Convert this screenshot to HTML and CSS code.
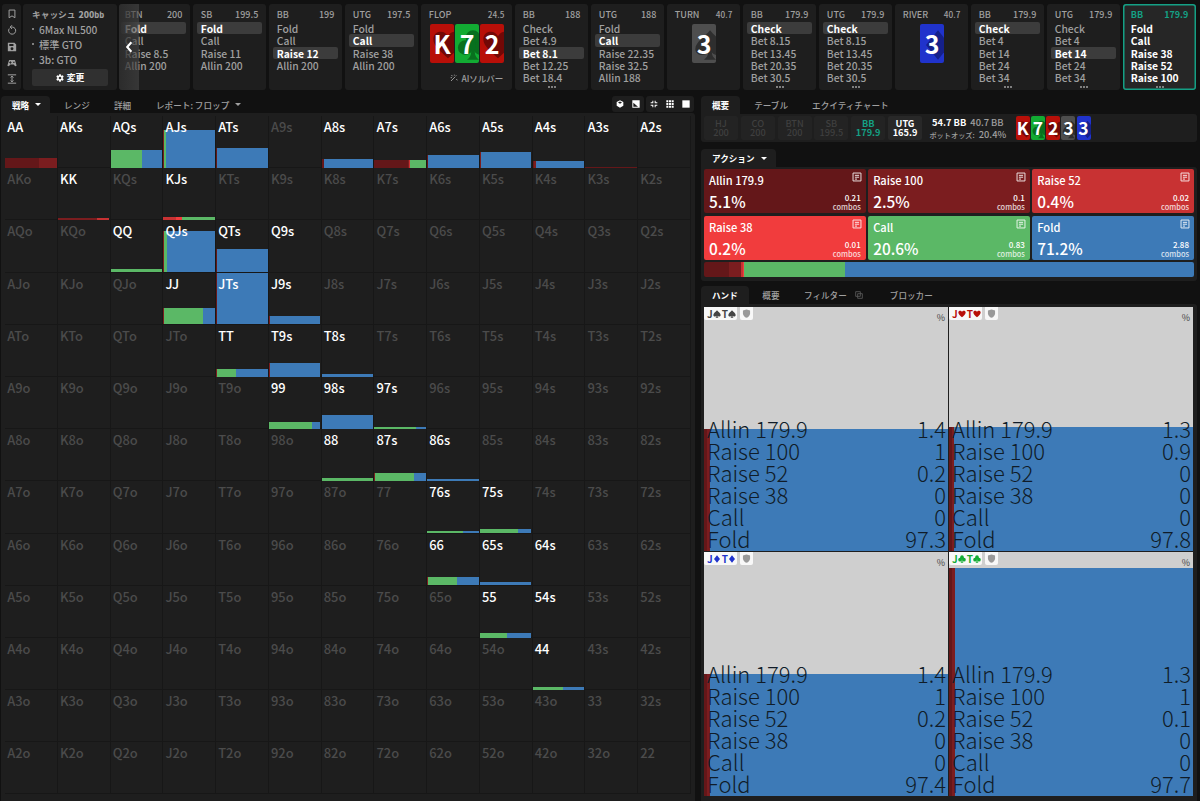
FILE: index.html
```html
<!DOCTYPE html>
<html lang="ja">
<head>
    <meta charset="UTF-8">
    <meta name="viewport" content="width=device-width, initial-scale=1.0">
    <title>GTO ソルバー</title>
    <link rel="stylesheet" href="styles.css">
</head>
<body>
    <svg class="defs" width="0" height="0">
        <symbol id="heart" viewBox="0 0 24 24"><path d="M12 22C7 17 1 13 1 7.500C1 4 3.500 2 6.500 2C9 2 11 3.500 12 5.500C13 3.500 15 2 17.500 2C20.500 2 23 4 23 7.500C23 13 17 17 12 22Z"/></symbol>
        <symbol id="spade" viewBox="0 0 24 24"><path d="M12 1C16 6 23 10 23 15C23 20 16 21 13.300 17.500C13.500 20 14.500 21.500 16.500 23H7.500C9.500 21.500 10.500 20 10.700 17.500C8 21 1 20 1 15C1 10 8 6 12 1Z"/></symbol>
        <symbol id="club" viewBox="0 0 24 24"><circle cx="12" cy="6.500" r="5.500"/><circle cx="6.200" cy="14" r="5.500"/><circle cx="17.800" cy="14" r="5.500"/><path d="M10 9H14L13.300 17C13.500 20 14.500 21.500 16.500 23H7.500C9.500 21.500 10.500 20 10.700 17Z"/></symbol>
        <symbol id="diamond" viewBox="0 0 24 24"><path d="M12 1L21 12L12 23L3 12Z"/></symbol>
        <symbol id="shield" viewBox="0 0 24 24"><path d="M12 1L21.500 4V11C21.500 17 17.500 21 12 23.500C6.500 21 2.500 17 2.500 11V4Z"/></symbol>
        <symbol id="note" viewBox="0 0 24 24"><path d="M2.500 2.500H21.500V21.500H2.500ZM7 8H17M7 12.500H17M7 17H12" fill="none" stroke="currentColor" stroke-width="2.400"/></symbol>
    </svg>

    <header class="topbar">
        <nav class="tools">
            <svg viewBox="0 0 24 24"><path d="M5 2.500H19V21L12 16.500L5 21Z"/></svg>
            <svg viewBox="0 0 24 24"><path d="M5.500 8.500A8.500 8.500 0 1 0 13 5H8M12 0.500L7.500 5L12 9.500"/></svg>
            <svg viewBox="0 0 24 24" class="solid"><path fill-rule="evenodd" d="M2 2H18L22 6V22H2ZM5.500 5V9.500H15.500V5ZM12 12.500A3.500 3.500 0 1 0 12 19.500A3.500 3.500 0 1 0 12 12.500Z"/></svg>
            <svg viewBox="0 0 24 24" class="solid"><path fill-rule="evenodd" d="M5 5H19L23 18C22 20 20 20 18.500 18.500L16 15.500H8L5.500 18.500C4 20 2 20 1 18ZM7 7.500V9.500H5V11.500H7V13.500H9V11.500H11V9.500H9V7.500ZM15 9V12H18V9Z"/></svg>
            <svg viewBox="0 0 24 24"><path d="M2 2H22M2 22H22M12 6V18M8.500 8.500L12 5L15.500 8.500M8.500 15.500L12 19L15.500 15.500"/></svg>
        </nav>
        <section class="setup">
            <h2>キャッシュ <b>200<small>bb</small></b></h2>
            <ul>
                <li>6Max NL500</li>
                <li>標準 GTO</li>
                <li>3b: GTO</li>
            </ul>
            <button type="button">
                <svg viewBox="0 0 24 24"><path fill-rule="evenodd" d="M9.500 1H14.500L15 4.500L17 5.500L20.500 4L23 8.500L20 11V13L23 15.500L20.500 20L17 18.500L15 19.500L14.500 23H9.500L9 19.500L7 18.500L3.500 20L1 15.500L4 13V11L1 8.500L3.500 4L7 5.500L9 4.500ZM12 8A4 4 0 1 0 12 16A4 4 0 1 0 12 8Z"/></svg>
                変更
            </button>
        </section>
        <div class="history">
            <div class="history-track" id="history"></div>
            <div class="scroll-back"><svg viewBox="0 0 12 20"><path d="M10 2L3 10L10 18"/></svg></div>
        </div>
    </header>

    <main class="main">
        <section class="strategy">
            <div class="tabs">
                <span class="tab active">戦略 <i class="caret"></i></span>
                <span class="tab">レンジ</span>
                <span class="tab">詳細</span>
                <span class="tab">レポート: フロップ <i class="caret"></i></span>
                <div class="views">
                    <span>
                        <svg viewBox="0 0 24 24"><path fill-rule="evenodd" d="M12 1L22 6V17L12 23L2 17V6ZM12 4.500L6 7.500L12 11L18 7.500Z"/></svg>
                        <svg viewBox="0 0 24 24"><path fill-rule="evenodd" d="M1 1H23V23H1ZM4 8V20H18Z"/></svg>
                    </span>
                    <span>
                        <svg viewBox="0 0 24 24"><path d="M7 2H10V10H2V7H7ZM14 2H17V7H22V10H14ZM2 14H10V22H7V17H2ZM14 14H22V17H17V22H14Z"/></svg>
                        <svg viewBox="0 0 24 24"><path d="M1 1H7V7H1ZM9 1H15V7H9ZM17 1H23V7H17ZM1 9H7V15H1ZM9 9H15V15H9ZM17 9H23V15H17ZM1 17H7V23H1ZM9 17H15V23H9ZM17 17H23V23H17Z"/></svg>
                        <svg viewBox="0 0 24 24"><path d="M1 1H23V23H1Z"/></svg>
                    </span>
                </div>
            </div>
            <div class="matrix" id="matrix"></div>
        </section>

        <aside class="side">
            <div class="tabs">
                <span class="tab active">概要</span>
                <span class="tab">テーブル</span>
                <span class="tab">エクイティチャート</span>
            </div>
            <div class="overview">
                <div class="player">HJ<br>200</div>
                <div class="player">CO<br>200</div>
                <div class="player">BTN<br>200</div>
                <div class="player">SB<br>199.5</div>
                <div class="player hero">BB<br>179.9</div>
                <div class="player villain">UTG<br>165.9</div>
                <div class="pot">
                    <div><b>54.7 BB</b> 40.7 BB</div>
                    <div><small>ポットオッズ:</small> 20.4%</div>
                </div>
                <div class="board" id="board"></div>
            </div>

            <div class="tabs action-tabs">
                <span class="tab active">アクション <i class="caret"></i></span>
            </div>
            <div class="actions">
                <div class="action-grid" id="actions"></div>
                <div class="action-bar" id="actionBar"></div>
            </div>

            <div class="tabs hand-tabs">
                <span class="tab active">ハンド</span>
                <span class="tab">概要</span>
                <span class="tab">フィルター <svg viewBox="0 0 24 24"><path d="M2 2H16V16H2ZM8 8H22V22H8Z"/></svg></span>
                <span class="tab">ブロッカー</span>
            </div>
            <div class="hands" id="hands"></div>
        </aside>
    </main>

    <script src="script.js"></script>
</body>
</html>
```
FILE: styles.css
```css
* {
    box-sizing: border-box;
}

body {
    margin: 0;
    width: 1200px;
    height: 801px;
    overflow: hidden;
    background-color: #111;
    color: #a0a0a0;
    font-family: "Noto Sans CJK JP", "Noto Sans", sans-serif;
    font-size: 9px;
    font-weight: 500;
    display: flex;
    flex-direction: column;
}

.defs {
    position: absolute;
}

svg {
    fill: currentColor;
    flex: none;
}

/* top bar */
.topbar {
    display: flex;
    height: 90px;
    padding: 4px 3px 0 2px;
    flex: none;
}

.tools {
    width: 19px;
    background-color: #1e1e1e;
    border-radius: 3px;
    display: flex;
    flex-direction: column;
    align-items: center;
    justify-content: space-between;
    padding: 5px 0 6px;
}

.tools svg {
    width: 10px;
    height: 10px;
    fill: none;
    stroke: #a0a0a0;
    stroke-width: 2.4;
}

.tools svg.solid {
    fill: #a0a0a0;
    stroke: none;
}

.setup {
    width: 94px;
    margin-left: 2px;
    padding: 4px 9px 0;
    background-color: #1e1e1e;
    border-radius: 3px;
}

.setup h2 {
    margin: 0;
    font-size: 8.7px;
    line-height: 13px;
    font-weight: 700;
    white-space: nowrap;
}

.setup b {
    margin-left: 1px;
}

.setup small {
    font-size: 7.5px;
}

.setup ul {
    list-style: none;
    margin: 2px 0 0;
    padding: 0;
    font-size: 10.2px;
    line-height: 14.9px;
}

.setup li::before {
    content: "";
    display: inline-block;
    width: 2px;
    height: 2px;
    margin-right: 5px;
    border-radius: 50%;
    background-color: #a0a0a0;
    vertical-align: 4px;
}

.setup button {
    display: flex;
    align-items: center;
    justify-content: center;
    gap: 3px;
    width: 76px;
    height: 17px;
    margin-top: 1.5px;
    padding: 0;
    border: none;
    border-radius: 2px;
    background-color: #303030;
    color: #fff;
    font-family: inherit;
    font-size: 8.8px;
    font-weight: 700;
}

.setup button svg {
    width: 8px;
    height: 8px;
}

.history {
    position: relative;
    flex: 1;
    margin-left: 2px;
    overflow: hidden;
    border-radius: 3px;
}

.history-track {
    display: flex;
    gap: 2.5px;
    height: 100%;
    margin-left: -2.2px;
}

.node {
    width: 73.5px;
    flex: none;
    background-color: #1e1e1e;
    border-radius: 3px;
    padding: 4px 4px 0;
    position: relative;
    white-space: nowrap;
}

.node.flop {
    width: 91.5px;
}

.node-head {
    display: flex;
    justify-content: space-between;
    padding: 0 4px;
    font-size: 9px;
    line-height: 13px;
}

.street .node-head span:last-child {
    font-size: 8.2px;
}

.node-head + .option {
    margin-top: 1px;
}

.option {
    height: 12.3px;
    padding-left: 4px;
    font-size: 10.3px;
    line-height: 13px;
}

.option.picked {
    background-color: #3c3c3c;
    border-radius: 2px;
    color: #fff;
    font-weight: 700;
}

.more {
    display: flex;
    justify-content: center;
    gap: 1px;
    margin-top: 2.5px;
}

.more i {
    width: 2px;
    height: 2px;
    border-radius: 50%;
    background-color: #a0a0a0;
}

.node.current {
    background-color: #262626;
    box-shadow: inset 0 0 0 1.5px #14a085;
}

.current .node-head {
    color: #14a085;
    font-weight: 700;
}

.current .option {
    color: #fff;
    font-weight: 700;
}

.node-cards {
    display: flex;
    justify-content: center;
    gap: 1px;
    margin: 3px 0 0 1px;
}

.ai {
    display: flex;
    justify-content: flex-end;
    align-items: center;
    gap: 3px;
    margin: 8px 5px 0 0;
    font-size: 8.5px;
    line-height: 14px;
}

.ai svg {
    width: 8px;
    height: 8px;
    stroke: currentColor;
    stroke-width: 2.8;
}

.card {
    position: relative;
    width: 24px;
    height: 39px;
    border-radius: 2px;
    overflow: hidden;
    display: flex;
    align-items: center;
    justify-content: center;
    color: #fff;
    font-size: 25px;
    font-weight: 700;
    line-height: 39px;
}

.card svg {
    position: absolute;
    width: 32px;
    height: 38px;
    left: 2px;
    top: 2px;
}

.card span {
    position: relative;
}

.card.heart {
    background-color: #b80f08;
}

.card.heart svg {
    color: #720806;
}

.card.club {
    background-color: #12ab33;
}

.card.club svg {
    color: #08701e;
}

.card.spade {
    background-color: #4e4e4e;
}

.card.spade svg {
    color: #2e2e2e;
}

.card.diamond {
    background-color: #2033cc;
}

.card.diamond svg {
    color: #15208a;
}

.scroll-back {
    position: absolute;
    left: 0;
    top: 0;
    width: 20px;
    height: 100%;
    background: linear-gradient(90deg, rgba(45, 45, 45, 0.9), rgba(75, 75, 75, 0.55));
    color: #fff;
}

.scroll-back svg {
    display: block;
    width: 8px;
    height: 12px;
    margin: 37px 0 0 6px;
    fill: none;
    stroke: #fff;
    stroke-width: 3.5;
}

/* tabs */
.tabs {
    display: flex;
    height: 18px;
    font-size: 8.6px;
    line-height: 18px;
}

.tab {
    display: flex;
    align-items: center;
    padding: 0 11px;
    white-space: nowrap;
}

.tab.active {
    background-color: #1e1e1e;
    border-radius: 4px 4px 0 0;
    color: #fff;
    font-weight: 700;
}

.caret {
    margin-left: 6px;
    border: 3px solid transparent;
    border-top: 3px solid currentColor;
    border-bottom: none;
}

.main {
    display: flex;
    flex: 1;
    min-height: 0;
}

.strategy {
    width: 694px;
    margin-left: 1px;
    display: flex;
    flex-direction: column;
}

.strategy .tabs {
    margin-top: 6px;
    height: 17px;
}

.strategy .tab:nth-child(1) {
    width: 49px;
}

.strategy .tab:nth-child(2) {
    width: 51px;
    padding-left: 14px;
}

.strategy .tab:nth-child(3) {
    width: 44px;
    padding-left: 13px;
}

.views {
    margin-left: auto;
    display: flex;
    gap: 2px;
    padding-right: 1px;
}

.views span {
    display: flex;
    align-items: center;
    gap: 8px;
    height: 16px;
    padding: 0 4px;
    border-radius: 3px;
    background-color: #1e1e1e;
    color: #fff;
}

.views svg {
    width: 8px;
    height: 8px;
}

/* 13 x 13 range matrix */
.matrix {
    flex: 1;
    display: grid;
    grid-template-columns: repeat(13, 52.75px);
    grid-template-rows: repeat(13, 52.2px);
    padding: 3px 0 0 4px;
    background-color: #1e1e1e;
    border-radius: 0 3px 0 0;
}

.cell {
    position: relative;
    padding-left: 2.2px;
    border-right: 1px solid #171717;
    border-bottom: 1px solid #171717;
    color: #4b4b4b;
    font-size: 12.9px;
    line-height: 21px;
}

.cell span {
    position: relative;
}

.cell.in-range {
    color: #fff;
}

.fill {
    position: absolute;
    left: 0;
    right: 0;
    bottom: 0;
    display: flex;
}

.cell .fill {
    bottom: -0.7px;
}

.allin { background-color: #641719; }
.raise100 { background-color: #7b1d1f; }
.raise52 { background-color: #c83233; }
.raise38 { background-color: #f13c3d; }
.call { background-color: #5bb866; }
.fold { background-color: #3d7ab7; }

/* right side */
.side {
    width: 496px;
    margin-left: 6px;
    display: flex;
    flex-direction: column;
}

.side > .tabs:first-child {
    margin-top: 6px;
}

.side > .tabs:first-child .tab:nth-child(2) {
    padding: 0 13px 0 14px;
}

.overview {
    display: flex;
    height: 28px;
    padding: 2px 3px;
    background-color: #1e1e1e;
    border-radius: 0 3px 3px 3px;
}

.player {
    width: 34px;
    height: 24px;
    margin-right: 2.8px;
    padding-top: 2.5px;
    border-radius: 2px;
    background-color: #232323;
    color: #3f3f3f;
    font-size: 9.2px;
    line-height: 9.7px;
    text-align: center;
}

.player.hero {
    color: #14a085;
    font-weight: 700;
}

.player.villain {
    background-color: #282828;
    color: #fff;
    font-weight: 700;
}

.pot {
    width: 86px;
    padding-top: 1px;
    font-size: 9.3px;
    line-height: 11.6px;
    text-align: center;
    white-space: nowrap;
}

.pot b {
    margin-right: 2px;
    color: #fff;
}

.pot small {
    margin-right: 2px;
    font-size: 7.2px;
}

.board {
    display: flex;
    gap: 1.2px;
    margin-left: 5px;
}

.board .card {
    width: 14px;
    height: 24px;
    font-size: 17.5px;
    line-height: 24px;
}

.board .card svg {
    width: 19px;
    height: 23px;
    left: 1px;
}

.action-tabs {
    margin-top: 7px;
}

.action-tabs .tab {
    padding-right: 9px;
}

.actions {
    height: 114px;
    padding: 2px 3px;
    background-color: #1e1e1e;
    border-radius: 0 3px 3px 3px;
}

.action-grid {
    display: grid;
    grid-template-columns: repeat(3, 1fr);
    grid-template-rows: 44.2px 44.2px;
    gap: 2.4px;
}

.action {
    display: grid;
    grid-template-columns: 1fr auto;
    grid-template-rows: 21px 21px;
    padding: 1px 5px 0;
    border-radius: 2px;
    color: #fff;
}

.action .name {
    font-size: 11.1px;
    line-height: 20px;
}

.action svg {
    justify-self: end;
    width: 10px;
    height: 10px;
    margin: 2px -1px 0 0;
    opacity: 0.85;
}

.action .freq {
    font-size: 15.4px;
    line-height: 20px;
}

.action .combos {
    font-size: 8px;
    line-height: 9px;
    text-align: right;
    padding-top: 2px;
}

.action small {
    font-size: 7.4px;
    opacity: 0.8;
}

.action-bar {
    display: flex;
    height: 15px;
    margin-top: 2px;
    border-radius: 2px;
    overflow: hidden;
}

.hand-tabs {
    margin-top: 5px;
    line-height: 19px;
}

.hand-tabs .tab {
    margin-right: 2.5px;
}

.hand-tabs .tab:nth-child(3) {
    margin-right: 5px;
}

.hand-tabs svg {
    width: 8px;
    height: 8px;
    margin-left: 8px;
    fill: none;
    stroke: #5a5a5a;
    stroke-width: 2.5;
}

.hands {
    flex: 1;
    display: grid;
    grid-template-columns: 244px 244px;
    grid-template-rows: 244px 244px;
    gap: 1px;
    padding: 3px;
    background-color: #1e1e1e;
    border-radius: 0 3px 0 0;
}

.hand {
    position: relative;
    background-color: #cfcfcf;
    color: #444;
    overflow: hidden;
}

.hand-head {
    position: relative;
    display: flex;
    gap: 3px;
    height: 13px;
}

.combo,
.lock {
    display: flex;
    align-items: center;
    height: 13px;
    background-color: #f8f8f8;
    border-radius: 0 0 2px 2px;
}

.combo {
    width: 33px;
    padding-left: 3px;
    font-size: 10px;
    font-weight: 700;
    line-height: 14px;
}

.combo svg {
    width: 8px;
    height: 8px;
    margin-right: 1px;
}

.lock {
    width: 13px;
    justify-content: center;
    color: #999;
}

.lock svg {
    width: 9px;
    height: 9px;
}

.combo.heart { color: #b80f08; }
.combo.diamond { color: #2033cc; }
.combo.club { color: #12ab33; }

.unit {
    margin: 4px 3px 0 auto;
    font-size: 9px;
    font-weight: 400;
    line-height: 13px;
}

.rows {
    position: absolute;
    left: 3px;
    right: 2px;
    bottom: 2px;
    color: #101c28;
    font-size: 22px;
    font-weight: 300;
    line-height: 22px;
}

.rows div {
    display: flex;
    justify-content: space-between;
}
```
FILE: script.js
```js
const actionNames = ['Allin 179.9', 'Raise 100', 'Raise 52', 'Raise 38', 'Call', 'Fold'];
const actionClasses = ['allin', 'raise100', 'raise52', 'raise38', 'call', 'fold'];

// [position, stack, options, picked index, has more options]
const nodes = [
    ['BTN', '200', ['Fold', 'Call', 'Raise 8.5', 'Allin 200'], 0],
    ['SB', '199.5', ['Fold', 'Call', 'Raise 11', 'Allin 200'], 0],
    ['BB', '199', ['Fold', 'Call', 'Raise 12', 'Allin 200'], 2],
    ['UTG', '197.5', ['Fold', 'Call', 'Raise 38', 'Allin 200'], 1],
    { street: 'FLOP', pot: '24.5', cards: [['K', 'heart'], ['7', 'club'], ['2', 'heart']] },
    ['BB', '188', ['Check', 'Bet 4.9', 'Bet 8.1', 'Bet 12.25', 'Bet 18.4'], 2, true],
    ['UTG', '188', ['Fold', 'Call', 'Raise 22.35', 'Raise 32.5', 'Allin 188'], 1],
    { street: 'TURN', pot: '40.7', cards: [['3', 'spade']] },
    ['BB', '179.9', ['Check', 'Bet 8.15', 'Bet 13.45', 'Bet 20.35', 'Bet 30.5'], 0, true],
    ['UTG', '179.9', ['Check', 'Bet 8.15', 'Bet 13.45', 'Bet 20.35', 'Bet 30.5'], 0, true],
    { street: 'RIVER', pot: '40.7', cards: [['3', 'diamond']] },
    ['BB', '179.9', ['Check', 'Bet 4', 'Bet 14', 'Bet 24', 'Bet 34'], 0, true],
    ['UTG', '179.9', ['Check', 'Bet 4', 'Bet 14', 'Bet 24', 'Bet 34'], 2, true],
    ['BB', '179.9', ['Fold', 'Call', 'Raise 38', 'Raise 52', 'Raise 100'], -1, true]
];

function icon(name) {
    return `<svg><use href="#${name}"/></svg>`;
}

function card([rank, suit]) {
    return `<div class="card ${suit}">${icon(suit)}<span>${rank}</span></div>`;
}

function renderNode(node) {
    if (node.street) {
        const wand = '<svg viewBox="0 0 24 24"><path d="M3 21L16 8M4 3L8 7M19 15L22 19M13 2V5M20 3L18 5M2 11H6"/></svg>';
        const flop = node.street === 'FLOP';
        return `<div class="node street ${flop ? 'flop' : ''}">
            <div class="node-head"><span>${node.street}</span><span>${node.pot}</span></div>
            <div class="node-cards">${node.cards.map(card).join('')}</div>
            ${flop ? `<div class="ai">${wand}AIソルバー</div>` : ''}
        </div>`;
    }
    const [pos, stack, options, picked, more] = node;
    return `<div class="node ${picked < 0 ? 'current' : ''}">
        <div class="node-head"><span>${pos}</span><span>${stack}</span></div>
        ${options.map((o, i) => `<div class="option ${i === picked ? 'picked' : ''}">${o}</div>`).join('')}
        ${more ? '<div class="more"><i></i><i></i><i></i></div>' : ''}
    </div>`;
}

// bar height in px, then share of each action: allin, 100, 52, 38, call, fold
const range = {
    AA: [10, 65, 35, 0, 0, 0, 0],
    AKs: [0],
    AQs: [18, 0, 1.5, 0, 0, 60, 38.5],
    AJs: [38, 0, 1.2, 0, 0, 4, 94.8],
    ATs: [20, 1, 1, 0, 0, 0, 98],
    A8s: [9, 4, 1.5, 0, 0, 0, 94.5],
    A7s: [8, 66, 2, 2, 0, 30, 0],
    A6s: [13, 1, 1, 0, 0, 0, 98],
    A5s: [16, 1, 2, 0, 0, 0, 97],
    A4s: [7, 3, 3, 0, 0, 0, 94],
    A3s: [1.2, 100, 0, 0, 0, 0, 0],
    A2s: [0],
    KK: [2, 0, 76, 24, 0, 0, 0],
    KJs: [3, 0, 0, 24, 12, 64, 0],
    QQ: [3, 0, 0, 0, 0, 100, 0],
    QJs: [41, 0, 1.2, 0, 0, 6.5, 92.3],
    QTs: [23, 1, 1, 0, 0, 0, 98],
    Q9s: [0],
    JJ: [16, 0, 1, 0, 0, 75, 24],
    JTs: [51.5, 1, 1, 0, 0, 0, 98],
    J9s: [8, 1, 1, 0, 0, 0, 98],
    TT: [8, 0, 1, 0, 0, 37, 62],
    T9s: [14, 0, 1.5, 0, 0, 0, 98.5],
    T8s: [3, 0, 1, 0, 0, 0, 99],
    99: [6.5, 0, 1, 0, 0, 82, 17],
    '98s': [13.5, 0, 1, 0, 0, 0, 99],
    '97s': [2, 0, 0, 0, 0, 80, 20],
    88: [3.5, 0, 1, 0, 0, 99, 0],
    '87s': [8.5, 0, 1, 0, 0, 76, 23],
    '86s': [2.5, 0, 0, 0, 0, 0, 100],
    '76s': [2, 0, 0, 0, 0, 70, 30],
    '75s': [4, 0, 1, 0, 0, 73, 26],
    66: [8.5, 0, 1, 0, 0, 57, 42],
    '65s': [3.5, 0, 1, 0, 0, 0, 99],
    '64s': [0],
    55: [4.5, 0, 1, 0, 0, 51, 48],
    '54s': [0],
    44: [3, 0, 1, 0, 0, 58, 41]
};

function segments(shares) {
    return shares.map((s, i) => s ? `<div class="${actionClasses[i]}" style="width:${s}%"></div>` : '').join('');
}

function renderMatrix() {
    const ranks = 'AKQJT98765432';
    let html = '';
    for (let r = 0; r < 13; r++) {
        for (let c = 0; c < 13; c++) {
            let name = ranks[r] + ranks[c];
            if (c > r) name += 's';
            if (c < r) name = ranks[c] + ranks[r] + 'o';
            const data = range[name];
            const fill = data && data[0] ? `<div class="fill" style="height:${data[0]}px">${segments(data.slice(1))}</div>` : '';
            html += `<div class="cell ${data ? 'in-range' : ''}">${fill}<span>${name}</span></div>`;
        }
    }
    return html;
}

const totals = [[5.1, '0.21'], [2.5, '0.1'], [0.4, '0.02'], [0.2, '0.01'], [20.6, '0.83'], [71.2, '2.88']];

const hands = [
    { suit: 'spade', height: 50, freq: [1.4, 1, 0.2, 0, 0, 97.3] },
    { suit: 'heart', height: 51, freq: [1.3, 0.9, 0, 0, 0, 97.8] },
    { suit: 'diamond', height: 50.2, freq: [1.4, 1, 0.2, 0, 0, 97.4] },
    { suit: 'club', height: 93.4, freq: [1.3, 1, 0.1, 0, 0, 97.7] }
];

document.getElementById('history').innerHTML = nodes.map(renderNode).join('');
document.getElementById('matrix').innerHTML = renderMatrix();
document.getElementById('board').innerHTML =
    [['K', 'heart'], ['7', 'club'], ['2', 'heart'], ['3', 'spade'], ['3', 'diamond']].map(card).join('');

document.getElementById('actions').innerHTML = totals.map(([freq, combos], i) => `
    <div class="action ${actionClasses[i]}">
        <span class="name">${actionNames[i]}</span>${icon('note')}
        <span class="freq">${freq}%</span>
        <span class="combos">${combos}<br><small>combos</small></span>
    </div>`).join('');
document.getElementById('actionBar').innerHTML = segments(totals.map(t => t[0]));

document.getElementById('hands').innerHTML = hands.map(h => `
    <div class="hand">
        <div class="fill" style="height:${h.height}%">${segments(h.freq)}</div>
        <div class="hand-head">
            <div class="combo ${h.suit}">J${icon(h.suit)}T${icon(h.suit)}</div>
            <div class="lock">${icon('shield')}</div>
            <span class="unit">%</span>
        </div>
        <div class="rows">${h.freq.map((f, i) => `<div><span>${actionNames[i]}</span><span>${f}</span></div>`).join('')}</div>
    </div>`).join('');
```
